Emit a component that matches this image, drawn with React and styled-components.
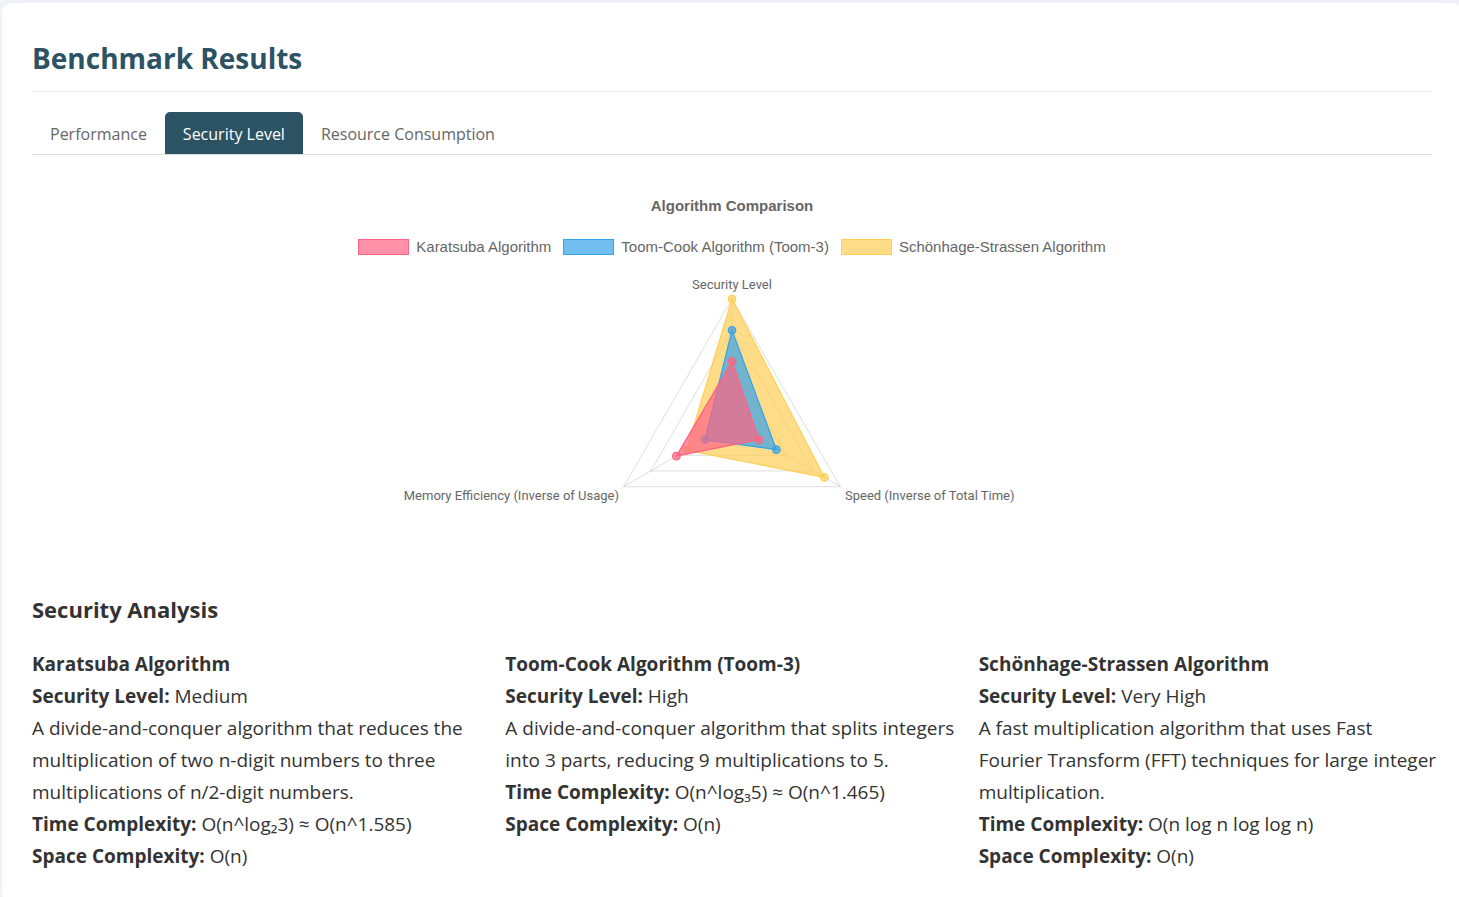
import React, { useState } from 'react';
import styled, { createGlobalStyle } from 'styled-components';

const GlobalStyle = createGlobalStyle`
  * { box-sizing: border-box; }
  body {
    margin: 0;
    background: #f2f3f8;
    color: #333;
    font-family: "Segoe UI", "Open Sans", "Noto Sans", sans-serif;
    font-size: 19px;
    line-height: 32px;
  }
`;

const Page = styled.main`
  padding: 3px 0 20px 2px;
  overflow: hidden;
`;

const Card = styled.section`
  margin-right: -3px;
  padding: 30px;
  background: #fff;
  border-radius: 10px;
  box-shadow: 0 0 20px rgba(0, 0, 0, 0.02);
`;

const Title = styled.h1`
  margin: 0 0 20px;
  padding-bottom: 8px;
  border-bottom: 1px solid #eee;
  color: #2c5364;
  font-size: 28px;
  line-height: 50px;
`;

const TabList = styled.div`
  display: flex;
  border-bottom: 1px solid #ddd;
`;

const Tab = styled.button`
  height: 42px;
  padding: 2px 18px 0;
  border: 0;
  border-radius: 5px 5px 0 0;
  background: ${(p) => (p.$active ? '#2c5364' : '#fff')};
  color: ${(p) => (p.$active ? '#fff' : '#666')};
  font-family: inherit;
  font-size: 16px;
  line-height: 24px;
  cursor: pointer;
`;

const Chart = styled.figure`
  display: flex;
  flex-direction: column;
  align-items: center;
  margin: 40px 0 74px;
  color: #666;
  font-family: "Liberation Sans", Arial, sans-serif;
`;

const ChartTitle = styled.figcaption`
  font-size: 15px;
  font-weight: bold;
  line-height: 22px;
`;

const Legend = styled.ul`
  display: flex;
  gap: 12px;
  margin: 20px 0 19px;
  padding: 0;
  list-style: none;
  font-size: 15px;
  line-height: 20px;
`;

const LegendItem = styled.li`
  display: flex;
  align-items: center;
  gap: 7px;
`;

const Swatch = styled.span`
  width: 51px;
  height: 16px;
  border: 1px solid rgb(${(p) => p.$rgb});
  background: rgba(${(p) => p.$rgb}, 0.7);
`;

const Radar = styled.svg`
  display: block;
  font-family: Roboto, "Liberation Sans", sans-serif;
  font-size: 13px;
  fill: #666;
`;

const SectionTitle = styled.h2`
  margin: 0 0 20px;
  font-size: 22px;
  line-height: 38px;
`;

const Columns = styled.div`
  display: grid;
  grid-template-columns: repeat(3, 1fr);
  gap: 20px;
`;

const AlgorithmName = styled.h3`
  margin: 0;
  font-size: 19px;
  line-height: 32px;
`;

const Line = styled.p`
  margin: 0 -8px 0 0;
`;

const CENTER = { x: 330, y: 148 };
const RADIUS = 125;

const AXES = [
  { label: 'Security Level', x: 330, y: 13, anchor: 'middle' },
  { label: 'Speed (Inverse of Total Time)', x: 443, y: 224, anchor: 'start' },
  { label: 'Memory Efficiency (Inverse of Usage)', x: 217, y: 224, anchor: 'end' },
];

const ALGORITHMS = [
  {
    name: 'Karatsuba Algorithm',
    rgb: '255, 99, 132',
    scores: [0.5, 0.25, 0.514],
    level: 'Medium',
    description:
      'A divide-and-conquer algorithm that reduces the multiplication of two n-digit numbers to three multiplications of n/2-digit numbers.',
    time: 'O(n^log₂3) ≈ O(n^1.585)',
    space: 'O(n)',
  },
  {
    name: 'Toom-Cook Algorithm (Toom-3)',
    rgb: '54, 162, 235',
    scores: [0.75, 0.41, 0.25],
    level: 'High',
    description:
      'A divide-and-conquer algorithm that splits integers into 3 parts, reducing 9 multiplications to 5.',
    time: 'O(n^log₃5) ≈ O(n^1.465)',
    space: 'O(n)',
  },
  {
    name: 'Schönhage-Strassen Algorithm',
    rgb: '255, 206, 86',
    scores: [1, 0.853, 0.42],
    level: 'Very High',
    description:
      'A fast multiplication algorithm that uses Fast Fourier Transform (FFT) techniques for large integer multiplication.',
    time: 'O(n log n log log n)',
    space: 'O(n)',
  },
];

const point = (value, axis) => {
  const angle = (axis * 2 * Math.PI) / 3 - Math.PI / 2;
  return [
    CENTER.x + RADIUS * value * Math.cos(angle),
    CENTER.y + RADIUS * value * Math.sin(angle),
  ];
};

const polygon = (values) => values.map((v, i) => point(v, i).join(',')).join(' ');

function RadarChart() {
  return (
    <Radar width="660" height="240" viewBox="0 0 660 240" role="img" aria-label="Algorithm Comparison">
      <g fill="none" stroke="rgba(0, 0, 0, 0.1)" strokeWidth="1.25">
        {[0.25, 0.5, 0.75, 1].map((r) => (
          <polygon key={r} points={polygon([r, r, r])} />
        ))}
        {AXES.map((axis, i) => {
          const [x, y] = point(1, i);
          return <line key={axis.label} x1={CENTER.x} y1={CENTER.y} x2={x} y2={y} />;
        })}
      </g>
      {[...ALGORITHMS].reverse().map((a) => (
        <g key={a.name} fill={`rgba(${a.rgb}, 0.7)`} stroke={`rgb(${a.rgb})`} strokeWidth="1.25">
          <polygon points={polygon(a.scores)} />
          {a.scores.map((s, i) => {
            const [cx, cy] = point(s, i);
            return <circle key={i} cx={cx} cy={cy} r="3.75" />;
          })}
        </g>
      ))}
      {AXES.map((axis) => (
        <text key={axis.label} x={axis.x} y={axis.y} textAnchor={axis.anchor}>
          {axis.label}
        </text>
      ))}
    </Radar>
  );
}

const TABS = ['Performance', 'Security Level', 'Resource Consumption'];

export default function App() {
  const [active, setActive] = useState('Security Level');
  return (
    <Page>
      <GlobalStyle />
      <Card>
        <Title>Benchmark Results</Title>
        <TabList role="tablist">
          {TABS.map((tab) => (
            <Tab
              key={tab}
              type="button"
              role="tab"
              aria-selected={tab === active}
              $active={tab === active}
              onClick={() => setActive(tab)}
            >
              {tab}
            </Tab>
          ))}
        </TabList>
        <Chart>
          <ChartTitle>Algorithm Comparison</ChartTitle>
          <Legend>
            {ALGORITHMS.map((a) => (
              <LegendItem key={a.name}>
                <Swatch $rgb={a.rgb} />
                {a.name}
              </LegendItem>
            ))}
          </Legend>
          <RadarChart />
        </Chart>
        <SectionTitle>Security Analysis</SectionTitle>
        <Columns>
          {ALGORITHMS.map((a) => (
            <article key={a.name}>
              <AlgorithmName>{a.name}</AlgorithmName>
              <Line><strong>Security Level:</strong> {a.level}</Line>
              <Line>{a.description}</Line>
              <Line><strong>Time Complexity:</strong> {a.time}</Line>
              <Line><strong>Space Complexity:</strong> {a.space}</Line>
            </article>
          ))}
        </Columns>
      </Card>
    </Page>
  );
}
